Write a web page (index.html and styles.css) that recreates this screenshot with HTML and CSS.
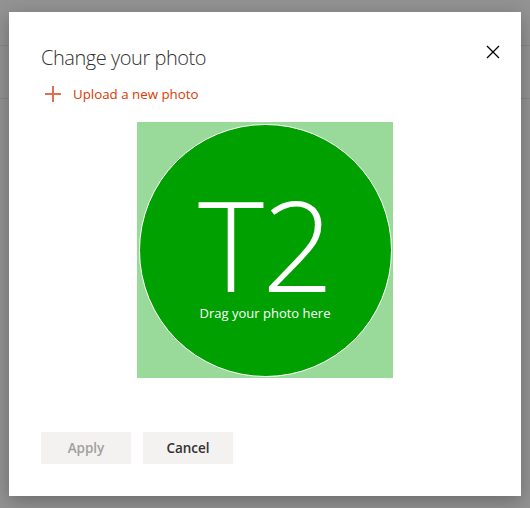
FILE: index.html
```html
<!DOCTYPE html>
<html>
<head>
<meta charset="utf-8">
<link rel="stylesheet" href="styles.css">
</head>
<body>
<div class="dialog">
  <button class="close" aria-label="Close">
    <svg width="14" height="14" viewBox="0 0 14 14"><path d="M1 1 L13 13 M13 1 L1 13" stroke="#000" stroke-width="1.3" fill="none"/></svg>
  </button>
  <h1 class="title">Change your photo</h1>
  <div class="upload">
    <svg class="plus" width="16" height="16" viewBox="0 0 16 16"><path d="M8 0 V16 M0 8 H16" stroke="#e0704f" stroke-width="2" fill="none"/></svg>
    <span>Upload a new photo</span>
  </div>
  <div class="photo">
    <div class="circle">
      <div class="initials">T2</div>
      <div class="hint">Drag your photo here</div>
    </div>
  </div>
  <div class="actions">
    <button class="btn disabled">Apply</button>
    <button class="btn">Cancel</button>
  </div>
</div>
</body>
</html>
```
FILE: styles.css
```css
html, body {
  margin: 0;
  height: 100%;
}
body {
  background-color: #939393;
  background-image:
    linear-gradient(#878787, #878787),
    linear-gradient(#878787, #878787);
  background-size: 100% 1px, 100% 1px;
  background-position: 0 45px, 0 98px;
  background-repeat: no-repeat;
  font-family: "Open Sans", "Noto Sans", sans-serif;
  overflow: hidden;
}
.dialog {
  position: relative;
  box-sizing: border-box;
  width: 512px;
  height: 484px;
  margin: 12px 0 0 9px;
  padding: 32px 32px 32px;
  background: #fff;
  box-shadow: 0 5px 18px rgba(0, 0, 0, 0.28);
  display: flex;
  flex-direction: column;
}
.close {
  position: absolute;
  top: 33px;
  right: 21px;
  width: 14px;
  height: 14px;
  padding: 0;
  border: 0;
  background: none;
  display: flex;
}
.title {
  margin: 0;
  font-size: 20px;
  line-height: 28px;
  font-weight: 300;
  letter-spacing: -0.45px;
  color: #323130;
}
.upload {
  margin-top: 6px;
  height: 32px;
  display: flex;
  align-items: center;
  gap: 12px;
  padding-left: 4px;
  color: #d83b01;
  font-size: 13.3px;
}
.photo {
  margin: 12px auto 0;
  width: 256px;
  height: 256px;
  background: rgb(153, 217, 153);
  display: flex;
  align-items: center;
  justify-content: center;
}
.circle {
  box-sizing: border-box;
  width: 253px;
  height: 253px;
  border-radius: 50%;
  background: #00a000;
  border: 1.5px solid #fff;
  display: flex;
  flex-direction: column;
  align-items: center;
  padding-top: 68px;
  color: #fff;
}
.initials {
  font-size: 126px;
  line-height: 100px;
  font-weight: 300;
  letter-spacing: -2px;
}
.hint {
  margin-top: 11px;
  font-size: 13px;
  line-height: 18px;
  font-weight: 400;
}
.actions {
  margin-top: auto;
  display: flex;
  gap: 12px;
}
.btn {
  width: 90px;
  height: 32px;
  border: 0;
  padding: 0;
  background: #f3f2f1;
  font-family: "Open Sans", "Noto Sans", sans-serif;
  font-weight: 600;
  font-size: 13.5px;
  color: #323130;
}
.btn.disabled {
  color: #a19f9d;
}
```
